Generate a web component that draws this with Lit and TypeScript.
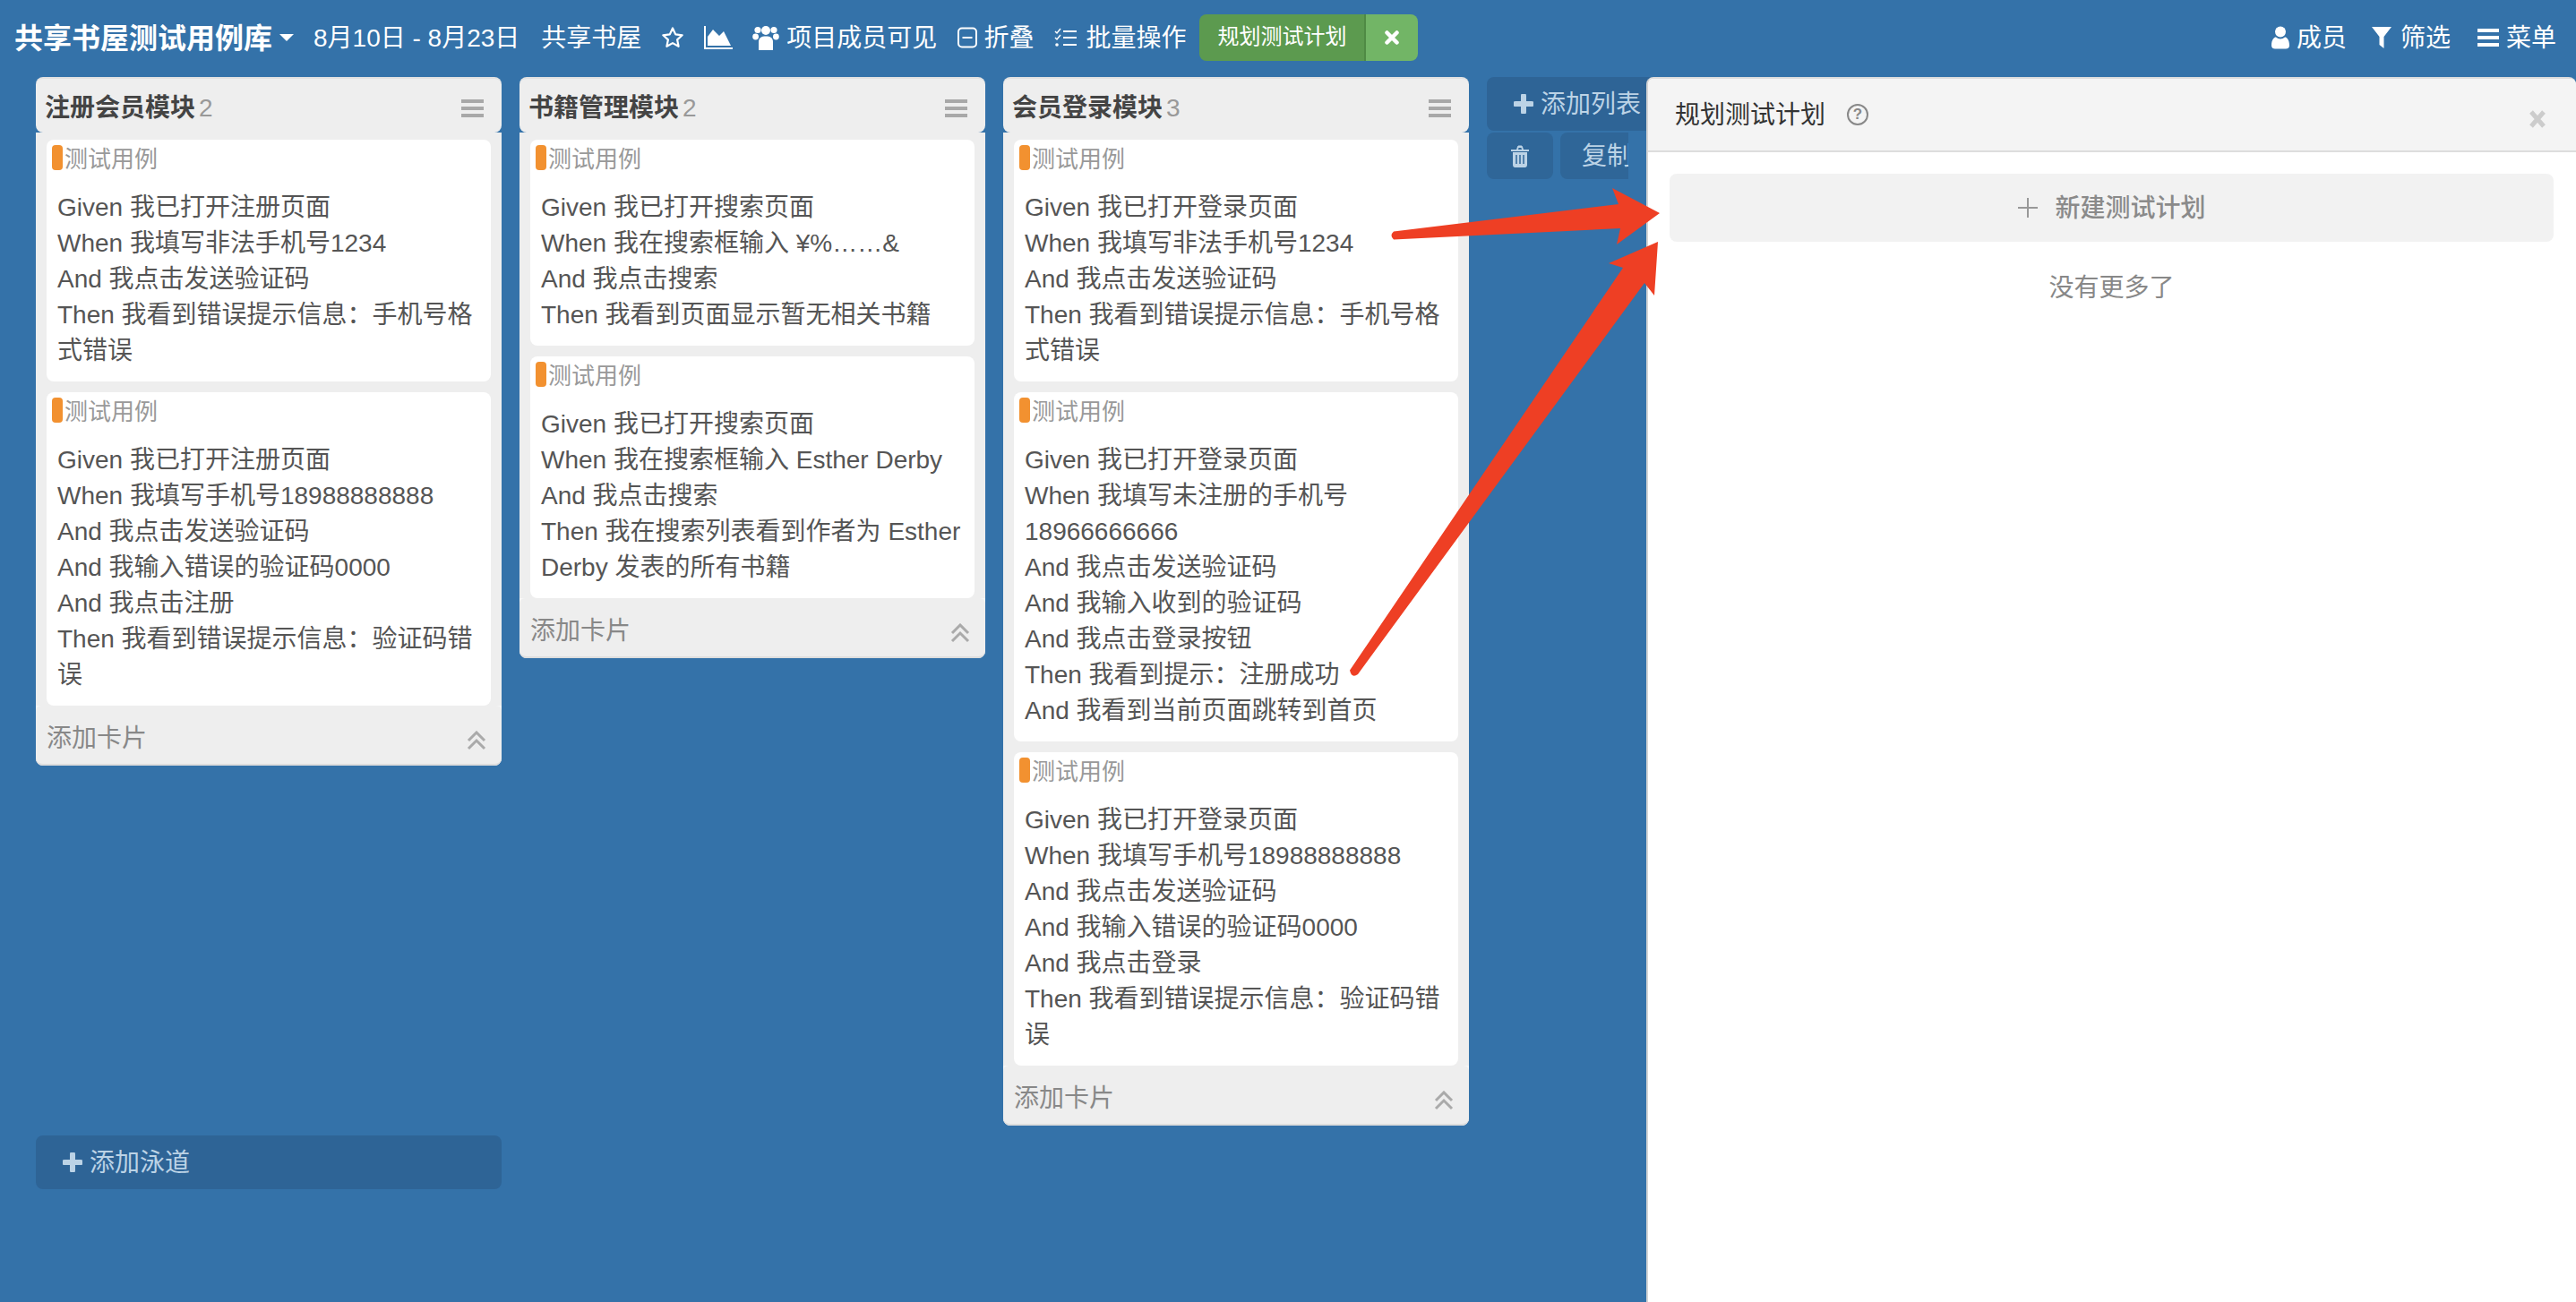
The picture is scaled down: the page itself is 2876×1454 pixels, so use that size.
import { LitElement, html, css, svg } from "lit";
import { customElement } from "lit/decorators.js";

const columns = [
  {
    title: "注册会员模块",
    cards: [
      ["Given 我已打开注册页面", "When 我填写非法手机号1234", "And 我点击发送验证码", "Then 我看到错误提示信息：手机号格式错误"],
      ["Given 我已打开注册页面", "When 我填写手机号18988888888", "And 我点击发送验证码", "And 我输入错误的验证码0000", "And 我点击注册", "Then 我看到错误提示信息：验证码错误"],
    ],
  },
  {
    title: "书籍管理模块",
    cards: [
      ["Given 我已打开搜索页面", "When 我在搜索框输入 ¥%……&", "And 我点击搜索", "Then 我看到页面显示暂无相关书籍"],
      ["Given 我已打开搜索页面", "When 我在搜索框输入 Esther Derby", "And 我点击搜索", "Then 我在搜索列表看到作者为 Esther Derby 发表的所有书籍"],
    ],
  },
  {
    title: "会员登录模块",
    cards: [
      ["Given 我已打开登录页面", "When 我填写非法手机号1234", "And 我点击发送验证码", "Then 我看到错误提示信息：手机号格式错误"],
      ["Given 我已打开登录页面", "When 我填写未注册的手机号18966666666", "And 我点击发送验证码", "And 我输入收到的验证码", "And 我点击登录按钮", "Then 我看到提示：注册成功", "And 我看到当前页面跳转到首页"],
      ["Given 我已打开登录页面", "When 我填写手机号18988888888", "And 我点击发送验证码", "And 我输入错误的验证码0000", "And 我点击登录", "Then 我看到错误提示信息：验证码错误"],
    ],
  },
];

const plusIcon = (cls: string) => svg`<svg class=${cls} viewBox="0 0 22 22"><path d="M11 2v18M2 11h18" stroke="currentColor" stroke-width="6" stroke-linecap="round" fill="none"/></svg>`;

@customElement("app-root")
export class AppRoot extends LitElement {
  static styles = css`
    :host {
      display: block;
      position: relative;
      width: 2876px;
      height: 1454px;
      overflow: hidden;
      background: #3472a9;
      font-family: "Liberation Sans", "Noto Sans CJK SC", sans-serif;
      font-size: 28px;
      line-height: 40px;
      color: #555;
    }
    svg { display: block; flex: none; }
    .topbar {
      display: flex;
      align-items: center;
      height: 84px;
      color: #fff;
      white-space: nowrap;
    }
    .brand { margin-left: 16px; padding-top: 2px; font-size: 32px; font-weight: 700; }
    .caret {
      margin-left: 8px;
      border-left: 8px solid transparent;
      border-right: 8px solid transparent;
      border-top: 8px solid #fff;
    }
    .date { margin-left: 22px; padding-top: 2px; }
    .home { margin-left: 24px; padding-top: 2px; }
    .star { margin-left: 22px; width: 26px; height: 26px; }
    .chart { margin-left: 22px; width: 32px; height: 26px; }
    .users { margin-left: 22px; width: 30px; height: 28px; }
    .vis { margin-left: 8px; padding-top: 2px; }
    .fold-i { margin-left: 23px; width: 22px; height: 24px; }
    .fold { margin-left: 7px; padding-top: 2px; }
    .tasks-i { margin-left: 23px; width: 25px; height: 22px; }
    .tasks { margin-left: 10px; padding-top: 2px; }
    .plan { display: flex; margin-left: 15px; height: 52px; }
    .plan-main {
      width: 186px;
      background: #5c9a4f;
      border-right: 2px solid #4f8a44;
      border-radius: 8px 0 0 8px;
      box-sizing: border-box;
      font-size: 24px;
      line-height: 50px;
      text-align: center;
    }
    .plan-x {
      display: flex;
      align-items: center;
      justify-content: center;
      width: 58px;
      background: #72b566;
      border-radius: 0 8px 8px 0;
    }
    .plan-x svg { width: 16px; height: 16px; }
    .right { display: flex; align-items: center; margin-left: auto; margin-right: 22px; }
    .right span { margin-left: 8px; padding-top: 2px; }
    .person { width: 20px; height: 26px; }
    .filter { margin-left: 28px; width: 22px; height: 26px; }
    .bars { margin-left: 30px; width: 24px; height: 22px; }
    .right .filter + span { margin-left: 10px; }

    .lane {
      display: flex;
      align-items: flex-start;
      gap: 20px;
      height: 1182px;
      margin-top: 2px;
      padding-left: 40px;
    }
    .col { width: 520px; flex: none; }
    .col-head {
      display: flex;
      align-items: center;
      justify-content: space-between;
      height: 62px;
      padding: 6px 20px 0 10px;
      box-sizing: border-box;
      background: #eee;
      border-radius: 8px;
      border-top: 2px solid #e2e2e2;
    }
    .col-title { font-weight: 700; color: #444; }
    .count { margin-left: 4px; font-weight: 400; color: #999; }
    .menu { width: 25px; height: 20px; }
    .cards {
      display: flex;
      flex-direction: column;
      gap: 12px;
      padding: 8px 12px 0;
      background: #eee;
    }
    .card { padding: 6px 12px 14px 0; background: #fff; border-radius: 8px; }
    .tag { display: flex; align-items: center; height: 28px; color: #999; font-size: 26px; }
    .tag span { margin-top: 3px; }
    .dot { width: 12px; height: 28px; margin: 0 2px 0 6px; background: #f29130; border-radius: 4px; }
    .body { margin: 22px 0 0 12px; }
    .foot-wrap { background: #f7f7f7; border-radius: 0 0 8px 8px; }
    .foot {
      display: flex;
      align-items: center;
      justify-content: space-between;
      height: 67px;
      padding: 8px 17px 0 12px;
      box-sizing: border-box;
      background: #eee;
      border-bottom: 2px solid #ddd;
      border-radius: 6px 6px 8px 8px;
      color: #888;
    }
    .chev { width: 22px; height: 22px; margin-top: 4px; }
    .side { flex: none; width: 520px; }
    .add-list {
      display: flex;
      align-items: center;
      height: 60px;
      padding-left: 30px;
      background: #2e6496;
      border-radius: 8px;
      color: #bcd3e6;
    }
    .add-list span, .add-lane span { padding-top: 2px; }
    .add-list .plus, .add-lane .plus { width: 22px; height: 22px; margin-right: 8px; }
    .side-row { display: flex; gap: 8px; margin-top: 2px; }
    .side-btn {
      display: flex;
      align-items: center;
      height: 52px;
      background: #2f6698;
      border-radius: 8px;
      color: #bcd3e6;
      overflow: hidden;
      white-space: nowrap;
    }
    .del { justify-content: center; width: 74px; }
    .del svg { width: 20px; height: 25px; }
    .copy { width: 76px; padding: 2px 0 0 24px; box-sizing: border-box; border-radius: 8px 0 0 8px; }
    .add-lane {
      display: flex;
      align-items: center;
      width: 520px;
      height: 60px;
      margin-left: 40px;
      padding-left: 30px;
      box-sizing: border-box;
      background: #2e6496;
      border-radius: 8px;
      color: #bcd3e6;
    }

    .panel {
      position: absolute;
      left: 1838px;
      top: 86px;
      right: 0;
      bottom: 0;
      background: #fff;
      border-left: 2px solid #d5d5d5;
      border-top: 2px solid #ddd;
      border-radius: 8px 8px 0 0;
    }
    .panel-head {
      display: flex;
      align-items: center;
      height: 80px;
      padding: 0 33px 0 30px;
      background: #f4f4f4;
      border-bottom: 2px solid #ddd;
      box-sizing: content-box;
      color: #333;
      border-radius: 6px 6px 0 0;
    }
    .panel-title { padding-top: 2px; }
    .help {
      width: 20px;
      height: 20px;
      margin-left: 24px;
      border: 2px solid #888;
      border-radius: 50%;
      color: #888;
      font-size: 17px;
      font-weight: 700;
      line-height: 20px;
      text-align: center;
    }
    .close { width: 20px; height: 20px; margin: 10px 0 0 auto; }
    .new-plan {
      display: flex;
      align-items: center;
      justify-content: center;
      height: 76px;
      margin: 24px 25px 0 24px;
      background: #f2f2f2;
      border-radius: 8px;
      color: #8a8a8a;
      font-weight: 500;
    }
    .new-plan span { padding-top: 1px; }
    .new-plan svg { width: 24px; height: 24px; margin-right: 18px; }
    .no-more { margin-top: 32px; margin-right: 1px; text-align: center; color: #888; }
    .arrows { position: absolute; left: 0; top: 0; width: 2876px; height: 1454px; pointer-events: none; }
  `;

  render() {
    return html`
      <div class="topbar">
        <span class="brand">共享书屋测试用例库</span>
        <i class="caret"></i>
        <span class="date">8月10日 - 8月23日</span>
        <span class="home">共享书屋</span>
        <svg class="star" viewBox="0 0 26 26"><path d="M13 2.5l3.2 6.9 7.5.9-5.6 5.1 1.5 7.4L13 19.1l-6.6 3.7 1.5-7.4-5.6-5.1 7.5-.9z" fill="none" stroke="#fff" stroke-width="2.2" stroke-linejoin="round"/></svg>
        <svg class="chart" viewBox="0 0 32 26"><path d="M1 0v25h31" fill="none" stroke="#fff" stroke-width="2"/><path d="M4 22V12l6-8 7 7 5-5 8 16z" fill="#fff"/></svg>
        <svg class="users" viewBox="0 0 30 28"><g fill="#fff"><circle cx="6" cy="5.5" r="3.6"/><circle cx="24" cy="5.5" r="3.6"/><circle cx="15" cy="6" r="5"/><circle cx="3.6" cy="13" r="3.4"/><circle cx="26.4" cy="13" r="3.4"/><path d="M7 28v-9c0-5 3-6.500 8-6.500s8 1.500 8 6.500v9z"/></g></svg>
        <span class="vis">项目成员可见</span>
        <svg class="fold-i" viewBox="0 0 22 24"><rect x="1" y="1.500" width="20" height="21" rx="4" fill="none" stroke="#fff" stroke-width="2"/><path d="M5.500 12h11" stroke="#fff" stroke-width="2"/></svg>
        <span class="fold">折叠</span>
        <svg class="tasks-i" viewBox="0 0 25 22"><path d="M1 4l2 2 4-5M1 11l2 2 4-5" fill="none" stroke="#fff" stroke-width="1.500"/><circle cx="3" cy="19" r="1.800" fill="#fff"/><path d="M10 4h15M10 11h15M10 19h15" stroke="#fff" stroke-width="2"/></svg>
        <span class="tasks">批量操作</span>
        <div class="plan">
          <div class="plan-main">规划测试计划</div>
          <div class="plan-x"><svg viewBox="0 0 16 16"><path d="M2.500 2.500l11 11M13.500 2.500l-11 11" stroke="#fff" stroke-width="4.500" stroke-linecap="round"/></svg></div>
        </div>
        <div class="right">
          <svg class="person" viewBox="0 0 20 26"><circle cx="10" cy="6.500" r="6" fill="#fff"/><path d="M0 22c0-7 3-9.500 5-9.500 3 2.500 7 2.500 10 0 2 0 5 2.500 5 9.500 0 2.500-2 3.500-4 3.500H4c-2 0-4-1-4-3.500z" fill="#fff"/></svg>
          <span>成员</span>
          <svg class="filter" viewBox="0 0 22 26"><path d="M0 1h22L13.500 12v13l-5-4v-9z" fill="#fff"/></svg>
          <span>筛选</span>
          <svg class="bars" viewBox="0 0 24 22"><path d="M0 3h24M0 11h24M0 19h24" stroke="#fff" stroke-width="4"/></svg>
          <span>菜单</span>
        </div>
      </div>

      <div class="lane">
        ${columns.map((c) => html`
          <section class="col">
            <div class="col-head">
              <div class="col-title">${c.title}<span class="count">${c.cards.length}</span></div>
              <svg class="menu" viewBox="0 0 25 20"><path d="M0 2h25M0 10h25M0 18h25" stroke="#a8a8a8" stroke-width="4"/></svg>
            </div>
            <div class="cards">
              ${c.cards.map((lines) => html`
                <article class="card">
                  <div class="tag"><i class="dot"></i><span>测试用例</span></div>
                  <div class="body">${lines.map((l) => html`<div>${l}</div>`)}</div>
                </article>
              `)}
            </div>
            <div class="foot-wrap">
              <div class="foot">
                <span>添加卡片</span>
                <svg class="chev" viewBox="0 0 22 22"><path d="M2 11l9-9 9 9M2 20l9-9 9 9" fill="none" stroke="#aaa" stroke-width="3"/></svg>
              </div>
            </div>
          </section>
        `)}
        <div class="side">
          <div class="add-list">${plusIcon("plus")}<span>添加列表</span></div>
          <div class="side-row">
            <div class="side-btn del"><svg viewBox="0 0 20 25"><path fill="#bcd3e6" d="M0 5h6l1-3c.3-1 1-1.500 2-1.500h2c1 0 1.700.5 2 1.500l1 3h6v2H0zM8 5h4l-.6-2H8.600zM2 8h16v14c0 1.700-1 3-2.500 3h-11C3 25 2 23.700 2 22z"/><path d="M6 11v10M10 11v10M14 11v10" stroke="#2f6698" stroke-width="1.500"/></svg></div>
            <div class="side-btn copy">复制</div>
          </div>
        </div>
      </div>

      <div class="add-lane">${plusIcon("plus")}<span>添加泳道</span></div>

      <aside class="panel">
        <div class="panel-head">
          <span class="panel-title">规划测试计划</span>
          <span class="help">?</span>
          <svg class="close" viewBox="0 0 20 20"><path d="M3 2l14 16M17 2L3 18" stroke="#ccc" stroke-width="5"/></svg>
        </div>
        <div class="new-plan">
          <svg viewBox="0 0 24 24"><path d="M12 1v22M1 12h22" stroke="#999" stroke-width="2"/></svg>
          <span>新建测试计划</span>
        </div>
        <div class="no-more">没有更多了</div>
      </aside>

      <svg class="arrows" viewBox="0 0 2876 1454">
        <path fill="#ee3f24" d="M1556 258.500L1807 228 1800 210 1853 238 1805 273 1809 255 1556 267.500Q1551 263 1556 258.500z"/>
        <path fill="#ee3f24" d="M1507 748.500L1812 299 1796 294 1851 270 1847 330 1836 316 1516 753Q1509 758 1507 748.500z"/>
      </svg>
    `;
  }
}
